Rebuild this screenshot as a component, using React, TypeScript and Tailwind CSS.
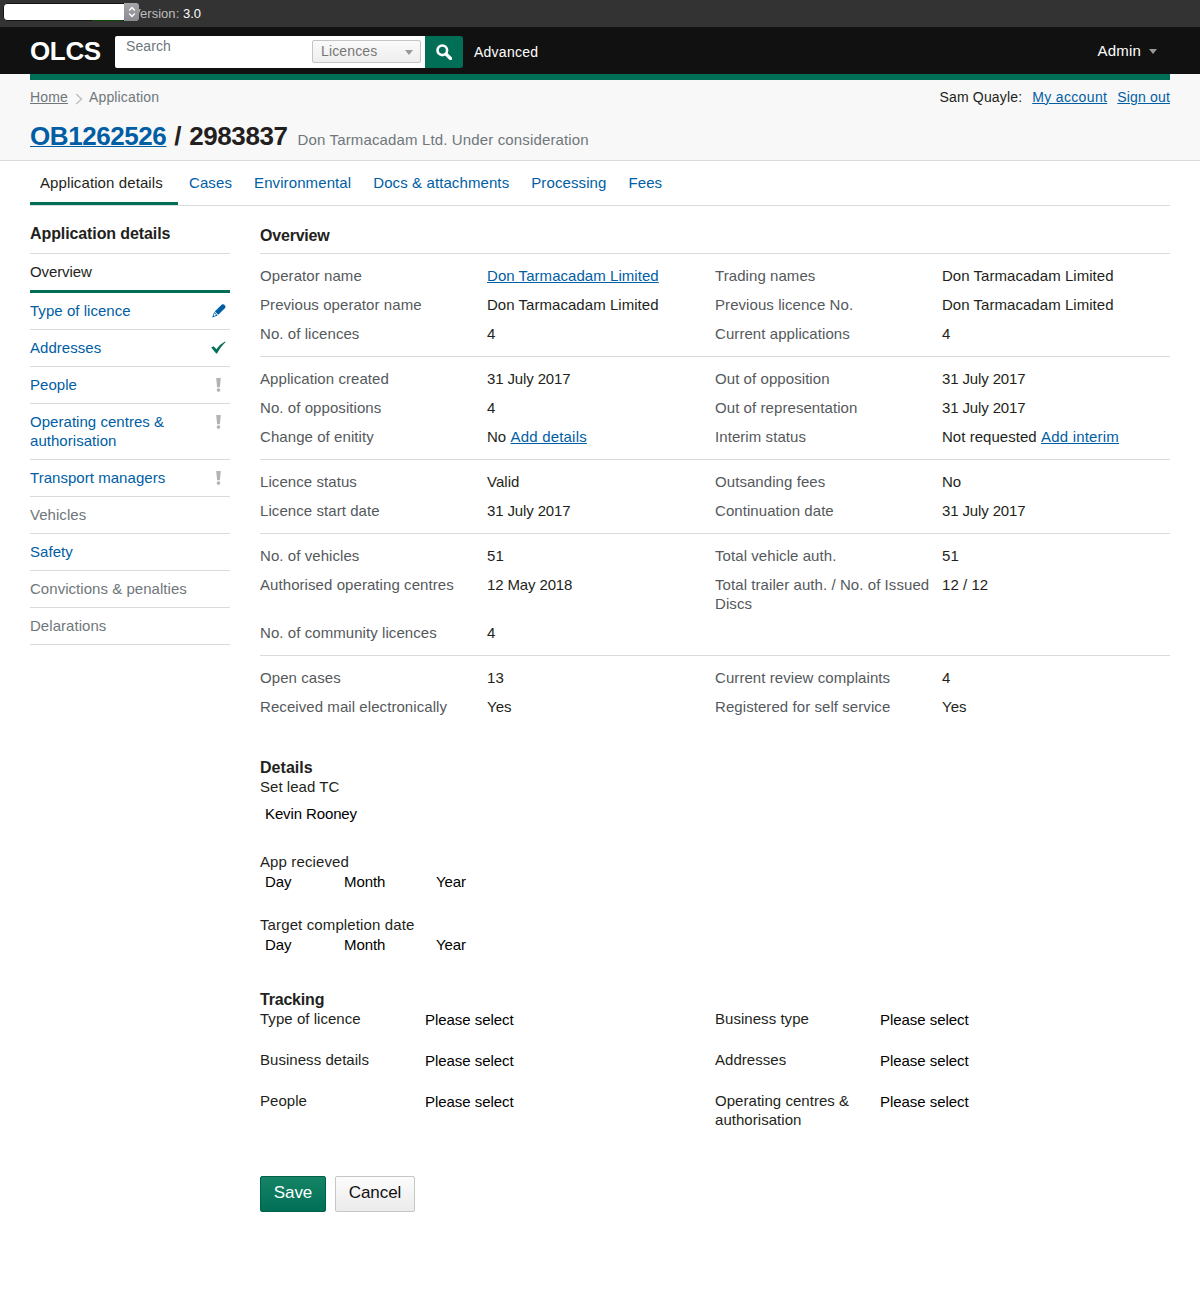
import React from "react";

type Status = "edit" | "done" | "alert";

const link = "text-[#005ea5]";
const underlined = "text-[#005ea5] underline underline-offset-1 decoration-1";

const tabs = ["Cases", "Environmental", "Docs & attachments", "Processing", "Fees"];

const sideNav: { label: string; icon?: Status; disabled?: boolean }[] = [
  { label: "Type of licence", icon: "edit" },
  { label: "Addresses", icon: "done" },
  { label: "People", icon: "alert" },
  { label: "Operating centres & authorisation", icon: "alert" },
  { label: "Transport managers", icon: "alert" },
  { label: "Vehicles", disabled: true },
  { label: "Safety" },
  { label: "Convictions & penalties", disabled: true },
  { label: "Delarations", disabled: true },
];

type Cell = { label: string; value?: string; action?: string };

const sections: Cell[][] = [
  [
    { label: "Operator name", action: "Don Tarmacadam Limited" },
    { label: "Trading names", value: "Don Tarmacadam Limited" },
    { label: "Previous operator name", value: "Don Tarmacadam Limited" },
    { label: "Previous licence No.", value: "Don Tarmacadam Limited" },
    { label: "No. of licences", value: "4" },
    { label: "Current applications", value: "4" },
  ],
  [
    { label: "Application created", value: "31 July 2017" },
    { label: "Out of opposition", value: "31 July 2017" },
    { label: "No. of oppositions", value: "4" },
    { label: "Out of representation", value: "31 July 2017" },
    { label: "Change of enitity", value: "No ", action: "Add details" },
    { label: "Interim status", value: "Not requested ", action: "Add interim" },
  ],
  [
    { label: "Licence status", value: "Valid" },
    { label: "Outsanding fees", value: "No" },
    { label: "Licence start date", value: "31 July 2017" },
    { label: "Continuation date", value: "31 July 2017" },
  ],
  [
    { label: "No. of vehicles", value: "51" },
    { label: "Total vehicle auth.", value: "51" },
    { label: "Authorised operating centres", value: "12 May 2018" },
    { label: "Total trailer auth. / No. of Issued Discs", value: "12 / 12" },
    { label: "No. of community licences", value: "4" },
  ],
  [
    { label: "Open cases", value: "13" },
    { label: "Current review complaints", value: "4" },
    { label: "Received mail electronically", value: "Yes" },
    { label: "Registered for self service", value: "Yes" },
  ],
];

const tracking = [
  "Type of licence",
  "Business type",
  "Business details",
  "Addresses",
  "People",
  "Operating centres & authorisation",
];

function StatusIcon({ type }: { type: Status }) {
  if (type === "edit") {
    return (
      <svg className="mt-[3px] h-[14px] w-[14px]" viewBox="0 0 14 14">
        <path d="M2.8 7.4 9.8 0.6Q10.9 -0.3 12 0.6L13.1 1.7Q14 2.8 13.1 3.9L6.3 10.8Z" fill="#005ea5" />
        <path d="M2.2 8 5.7 11.4 0.2 13.5Z" fill="#005ea5" />
        <path d="M2.4 9.2 4.2 11 2.3 11.9 1.7 11.3Z" fill="#fff" />
      </svg>
    );
  }
  if (type === "done") {
    return (
      <svg className="mt-[3px] h-[14px] w-[15px]" viewBox="0 0 15 14">
        <path d="M0.2 6.6 2.6 5.2 5.4 8.3Q8.8 3.4 14 0.6L14.5 1.2Q10 5 6 12.6H5.2Z" fill="#006f56" />
      </svg>
    );
  }
  return (
    <svg className="mt-[3px] mr-[5px] h-[14px] w-[5px]" viewBox="0 0 5 14">
      <path d="M0.2 0H4.8L3.9 9.3H1.1Z" fill="#b3b3b3" />
      <circle cx="2.5" cy="12.1" r="1.8" fill="#b3b3b3" />
    </svg>
  );
}

function Caret() {
  return <span className="h-0 w-0 border-x-[4.5px] border-t-[5.5px] border-x-transparent border-t-[#999]" />;
}

function DateFields({ label, className }: { label: string; className: string }) {
  return (
    <div className={className}>
      <p className="tracking-[0.12px]">{label}</p>
      <div className="mt-px flex pl-[5px] tracking-[-0.1px] text-black">
        <span className="w-[79px]">Day</span>
        <span className="w-[92px]">Month</span>
        <span>Year</span>
      </div>
    </div>
  );
}

export default function App() {
  return (
    <div className="h-[1314px] w-[1200px] overflow-hidden bg-white font-['Liberation_Sans',Arial,sans-serif] text-[15px] leading-[19px] tracking-[0.04px] text-[#231f20]">
      <div className="flex h-[27px] items-start bg-[#333] text-[13px] text-[#bfbfbf]">
        <div className="relative z-10 mt-[3px] ml-[3px] flex h-[18px] w-[136px] justify-end rounded-[4px] border border-[#151515] bg-white">
          <span className="absolute -bottom-px left-[88px] h-px w-[31px] bg-[#0b4a0b]" />
          <span className="-my-px -mr-px flex h-[18px] w-[15px] items-center justify-center rounded-r-[3px] bg-gradient-to-b from-[#a5a5aa] to-[#8a8a90]">
            <svg className="h-[12px] w-[8px]" viewBox="0 0 8 12" fill="none" stroke="#fff" strokeWidth="1.4">
              <path d="M1.2 4.4 4 1.6 6.8 4.4M1.2 7.6 4 10.4 6.8 7.6" />
            </svg>
          </span>
        </div>
        <p className="-ml-[7px] pt-[4px]">
          Version: <span className="text-white">3.0</span>
        </p>
      </div>

      <header className="flex h-[47px] items-start bg-[#111] px-[30px] text-white">
        <div className="w-[85px] pt-[9px] text-[26px] leading-[30px] font-bold tracking-[-0.35px]">OLCS</div>
        <div className="mt-[9px] flex h-[32px] w-[310px] rounded-l-[2px] bg-white">
          <span className="w-[197px] pl-[11px] pt-px text-[14px] tracking-[0.1px] text-[#6f777b]">Search</span>
          <div className="mt-[4px] flex h-[23px] w-[109px] items-center justify-between rounded-[2px] border border-[#c5c5c5] bg-gradient-to-b from-[#fafafa] to-[#eee] pr-[7px] pl-[8px] text-[14px] tracking-[0.15px] text-[#777]">
            Licences
            <span className="flex pt-[2px]">
              <Caret />
            </span>
          </div>
        </div>
        <div className="mt-[9px] flex h-[32px] w-[38px] items-center justify-center rounded-r-[3px] bg-[#006f56]">
          <svg className="h-[16px] w-[16px]" viewBox="0 0 16 16" fill="none" stroke="#fff">
            <circle cx="6.3" cy="6.3" r="4.8" strokeWidth="2.6" />
            <path d="M10 10 14.5 14.5" strokeWidth="3.2" strokeLinecap="round" />
          </svg>
        </div>
        <span className="pt-[16px] pl-[11px] text-[14px] tracking-[0.25px]">Advanced</span>
        <span className="ml-auto flex items-center gap-[8px] pt-[14px] pr-[13px] tracking-[0.2px]">
          Admin
          <span className="flex pt-[2px]">
            <Caret />
          </span>
        </span>
      </header>

      <div className="h-[87px] border-b border-[#d9dbdc] bg-[#f8f8f8] px-[30px]">
        <div className="h-[6px] bg-[#006f56]" />
        <div className="flex items-center pt-[8px] text-[14px] tracking-[0.15px] text-[#6f777b]">
          <span className="underline decoration-1 underline-offset-1">Home</span>
          <svg className="mt-[2px] mr-[6px] ml-[7px] h-[12px] w-[8px]" viewBox="0 0 8 12" fill="none" stroke="#bfc1c3" strokeWidth="1.5">
            <path d="M1.2 1 6.5 6 1.2 11" />
          </svg>
          <span>Application</span>
          <span className="ml-auto text-[#231f20]">Sam Quayle:</span>
          <span className={`ml-[10px] tracking-[0.35px] ${underlined}`}>My account</span>
          <span className={`ml-[10px] tracking-[0.17px] ${underlined}`}>Sign out</span>
        </div>
        <div className="flex items-baseline pt-[14px]">
          <h1 className="text-[26px] leading-[30px] font-bold tracking-[-0.43px]">
            <span className="text-[#005ea5] underline decoration-1 underline-offset-1">OB1262526</span>
            <span className="mx-[8px]">/</span>
            <span className="tracking-[-0.4px]">2983837</span>
          </h1>
          <span className="ml-[10px] tracking-[0.14px] text-[#6f777b]">Don Tarmacadam Ltd. Under consideration</span>
        </div>
      </div>

      <nav className="mx-[30px] flex h-[45px] border-b border-[#d9dbdc] tracking-[0.1px]">
        <span className="h-[44px] w-[148px] border-b-3 border-[#006f56] pt-[12px] pl-[10px]">Application details</span>
        <div className={`flex gap-[22px] pt-[12px] pl-[11px] ${link}`}>
          {tabs.map((t) => (
            <span key={t}>{t}</span>
          ))}
        </div>
      </nav>

      <div className="flex gap-[30px] px-[30px]">
        <aside className="w-[200px]">
          <h2 className="h-[48px] border-b border-[#d9dbdc] pt-[18px] text-[16px] font-bold tracking-[-0.1px]">
            Application details
          </h2>
          <div className="h-[39px] border-b-3 border-[#006f56] pt-[8px] tracking-[-0.1px]">Overview</div>
          {sideNav.map(({ label, icon, disabled }) => (
            <div key={label} className="flex items-start justify-between border-b border-[#d9dbdc] pt-[8px] pr-[4px] pb-[9px]">
              <span className={disabled ? "w-[170px] text-[#6f777b]" : "w-[150px] text-[#005ea5]"}>{label}</span>
              {icon && <StatusIcon type={icon} />}
            </div>
          ))}
        </aside>

        <main className="w-[910px]">
          <h2 className="h-[47px] pt-[20px] text-[16px] font-bold tracking-[-0.2px]">Overview</h2>
          {sections.map((cells, i) => (
            <dl key={i} className="grid grid-cols-[455px_455px] border-t border-[#d9dbdc] pt-[12px] pb-[3px]">
              {cells.map(({ label, value, action }) => (
                <div key={label} className="flex pb-[10px]">
                  <dt className="w-[227px] shrink-0 pr-[10px] tracking-[0.07px] text-[#55595c]">{label}</dt>
                  <dd className={/20\d\d$/.test(value ?? "") ? "tracking-[-0.13px] whitespace-nowrap" : "whitespace-pre"}>
                    {value}
                    {action && (
                      <span className={`${value ? "tracking-[0.2px]" : "tracking-[0.05px]"} ${underlined}`}>{action}</span>
                    )}
                  </dd>
                </div>
              ))}
            </dl>
          ))}

          <h2 className="mt-[30px] text-[16px] leading-[18px] font-bold">Details</h2>
          <p>Set lead TC</p>
          <p className="mt-[8px] pl-[5px] tracking-[-0.12px] text-black">Kevin Rooney</p>
          <DateFields label="App recieved" className="mt-[29px]" />
          <DateFields label="Target completion date" className="mt-[24px]" />

          <h2 className="mt-[37px] text-[16px] leading-[18px] font-bold tracking-[-0.2px]">Tracking</h2>
          <div className="grid grid-cols-[455px_455px] gap-y-[21px]">
            {tracking.map((label) => (
              <div key={label} className="flex">
                <span className="w-[165px] pr-[10px]">{label}</span>
                <span className="pt-px tracking-[-0.05px] text-black">Please select</span>
              </div>
            ))}
          </div>

          <div className="mt-[47px] flex gap-[9px] text-[17px] tracking-[-0.05px]">
            <button className="h-[36px] w-[66px] rounded-[2px] border border-[#00614a] bg-gradient-to-b from-[#158465] to-[#006f56] pb-[3px] text-white">
              Save
            </button>
            <button className="h-[36px] w-[80px] rounded-[2px] border border-[#c6c6c6] bg-gradient-to-b from-[#fcfcfc] to-[#ebebeb] pb-[3px] text-[#111]">
              Cancel
            </button>
          </div>
        </main>
      </div>
    </div>
  );
}
